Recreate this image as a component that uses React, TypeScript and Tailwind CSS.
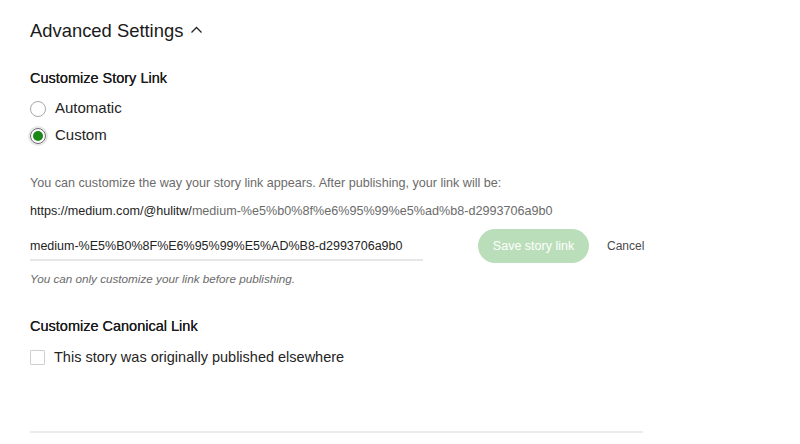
import React, { useState } from 'react';

const SLUG = 'medium-%E5%B0%8F%E6%95%99%E5%AD%B8-d2993706a9b0';

const Radio: React.FC<{ checked: boolean; label: string; onClick: () => void }> = ({ checked, label, onClick }) => (
  <button type="button" onClick={onClick} className="flex items-center gap-[9px] h-[27px]">
    {checked ? (
      <span className="w-[16px] h-[16px] rounded-full border border-[#6b6b6b] flex items-center justify-center shadow-[0_0_0_2px_#e8e8e8]">
        <span className="w-[10px] h-[10px] rounded-full bg-[#1a8917]" />
      </span>
    ) : (
      <span className="w-[16px] h-[16px] rounded-full border border-[#a8a8a8] bg-white" />
    )}
    <span className="text-[15px] text-[#242424]">{label}</span>
  </button>
);

export default function App() {
  const [mode, setMode] = useState<'auto' | 'custom'>('custom');
  const [slug, setSlug] = useState(SLUG);
  const [canonical, setCanonical] = useState(false);

  return (
    <div className="w-[800px] h-[444px] bg-white overflow-hidden font-['Liberation_Sans',Arial,sans-serif] text-[#242424]">
      <div className="pl-[30px] w-[643px]">
        <div className="flex items-center gap-[7px] pt-[17px] h-[44px]">
          <h2 className="text-[18.4px] text-[#1a1a1a]">Advanced Settings</h2>
          <svg width="13" height="13" viewBox="0 0 13 13" fill="none" stroke="#242424" strokeWidth="1.3">
            <path d="M1.5 8.5 L6.5 3.5 L11.5 8.5" />
          </svg>
        </div>

        <h3 className="mt-[24px] text-[14.5px] text-[#1a1a1a] leading-[20px] [text-shadow:0_0_0.4px_#242424]">
          Customize Story Link
        </h3>
        <div className="mt-[7px] flex flex-col items-start">
          <Radio checked={mode === 'auto'} label="Automatic" onClick={() => setMode('auto')} />
          <Radio checked={mode === 'custom'} label="Custom" onClick={() => setMode('custom')} />
        </div>

        <p className="mt-[25px] text-[12.6px] text-[#6b6b6b] leading-[18px] whitespace-nowrap">
          You can customize the way your story link appears. After publishing, your link will be:
        </p>
        <p className="mt-[10px] text-[12.6px] leading-[18px] whitespace-nowrap">
          https://medium.com/@hulitw/<span className="text-[#6b6b6b]">{slug.toLowerCase()}</span>
        </p>

        <div className="mt-[9px] flex items-center">
          <input
            value={slug}
            onChange={(e) => setSlug(e.target.value)}
            className="shrink-0 w-[393px] h-[30px] pt-[2px] border-b-2 border-[#e6e6e6] text-[12.5px] text-[#242424] outline-none bg-transparent"
          />
          <button
            type="button"
            className="shrink-0 ml-[55px] w-[111px] h-[34px] rounded-full bg-[#badeb9] text-white text-[12.5px] whitespace-nowrap"
          >
            Save story link
          </button>
          <button type="button" className="ml-[18px] text-[12px] text-[#4a4a4a]">
            Cancel
          </button>
        </div>
        <p className="mt-[8px] text-[11.7px] italic text-[#6b6b6b] leading-[16px]">
          You can only customize your link before publishing.
        </p>

        <h3 className="mt-[29px] text-[14.5px] text-[#1a1a1a] leading-[20px] [text-shadow:0_0_0.4px_#242424]">
          Customize Canonical Link
        </h3>
        <label className="mt-[10px] flex items-center gap-[9px] cursor-pointer">
          <input
            type="checkbox"
            checked={canonical}
            onChange={() => setCanonical(!canonical)}
            className="appearance-none w-[15px] h-[15px] border border-[#cfcfcf] rounded-[1px] checked:bg-[#1a8917]"
          />
          <span className="text-[14.5px] leading-[22px]">This story was originally published elsewhere</span>
        </label>

        <div className="mt-[63px] h-[2px] bg-[#ececec]" />
      </div>
    </div>
  );
}
